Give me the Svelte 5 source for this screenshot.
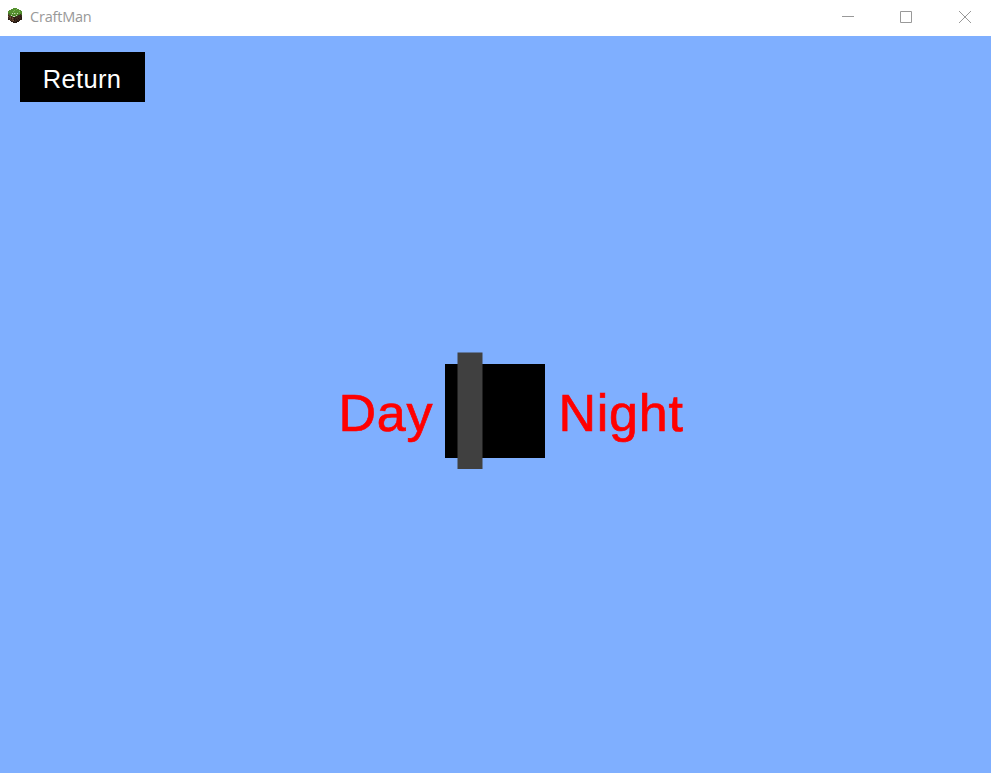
<script>
  let night = $state(false);

  // Pixel rows of the grass block icon, one letter per pixel
  const palette = {
    g: '#55902f', G: '#437a27', l: '#79b956', w: '#c9d8bd',
    b: '#5a3d28', B: '#3b281c', d: '#241811', m: '#7b5a3e'
  };
  const rows = [
    '.....gggg.....',
    '...ggggglgg...',
    '.ggggglgggggg.',
    'ggggglggggglgg',
    'gggggggggggggg',
    'GGggwgwlgwgggG',
    'bGGgggggggGGBG',
    'BbGwgGGgwGBBBB',
    'mBbBGwwGBBBBdB',
    'BbmBbdBdBBBBBd',
    'BBbBmbdBBBdBBd',
    'dBbBbBdBdBBddB',
    '..BbbmdBBdBB..',
    '...dBBBBddd...',
    '.....dddd.....'
  ];
  const pixels = rows.flatMap((row, y) =>
    [...row].map((c, x) => ({ x, y, fill: palette[c] })).filter((p) => p.fill)
  );
</script>

<div class="window">
  <header>
    <svg class="logo" width="14" height="15" viewBox="0 0 14 15" shape-rendering="crispEdges">
      {#each pixels as p}
        <rect x={p.x} y={p.y} width="1" height="1" fill={p.fill} />
      {/each}
    </svg>
    <span class="title">CraftMan</span>
    <div class="controls">
      <svg width="12" height="12"><path d="M0 5.5H12" /></svg>
      <svg width="12" height="12"><path d="M.5 .5H11.5V11.5H.5Z" /></svg>
      <svg class="close" width="12" height="12"><path d="M0 0L12 12M12 0L0 12" /></svg>
    </div>
  </header>
  <main>
    <button class="return">Return</button>
    <div class="switch-row">
      <span class="label day">Day</span>
      <button class="track" class:night aria-label="Toggle day or night" onclick={() => (night = !night)}>
        <svg class="handle" width="26" height="118" viewBox="0 0 26 118">
          <rect x="0.5" y="0.5" width="25" height="116.5" fill="#404040" />
        </svg>
      </button>
      <span class="label">Night</span>
    </div>
  </main>
</div>

<style>
  :global(body) { background: #fff; overflow: hidden; }
  .window { width: 991px; height: 773px; display: flex; flex-direction: column; }
  header { height: 36px; flex: none; display: flex; align-items: flex-start; background: #fff; }
  .logo { margin: 8px 0 0 8px; }
  .title {
    margin: 7px 0 0 8px;
    font: 14.5px/20px "Open Sans", "Noto Sans", sans-serif;
    letter-spacing: -0.2px;
    color: #999;
  }
  .controls { margin: 11px 20px 0 auto; display: flex; gap: 46px; }
  .controls svg { fill: none; stroke: #999; stroke-width: 1; }
  .controls .close { margin-left: 1px; }
  main {
    flex: 1;
    background: #7fafff;
    display: flex;
    flex-direction: column;
    align-items: flex-start;
    font-family: "Liberation Sans", Arial, sans-serif;
  }
  button { border: 0; padding: 0; margin: 0; border-radius: 0; background: #000; display: block; }
  .return {
    margin: 16px 0 0 20px;
    width: 125px;
    height: 50px;
    padding: 4px 1px 0 0;
    font: 25.5px/46px "Liberation Sans", Arial, sans-serif;
    letter-spacing: 0.3px;
    color: #fff;
  }
  .switch-row {
    margin: 250px 0 0 338.5px;
    height: 118px;
    display: flex;
    align-items: center;
  }
  .label {
    font-size: 52px;
    line-height: 60px;
    letter-spacing: 0.75px;
    color: #f00;
    -webkit-text-stroke: 0.7px #f00;
    padding-top: 3px;
    margin-left: 13.5px;
  }
  .day { width: 106.5px; margin-left: 0; }
  .track { width: 100px; height: 94px; display: flex; align-items: center; padding-left: 12px; }
  .track.night { padding-left: 62px; }
  .handle { flex: none; }
</style>
